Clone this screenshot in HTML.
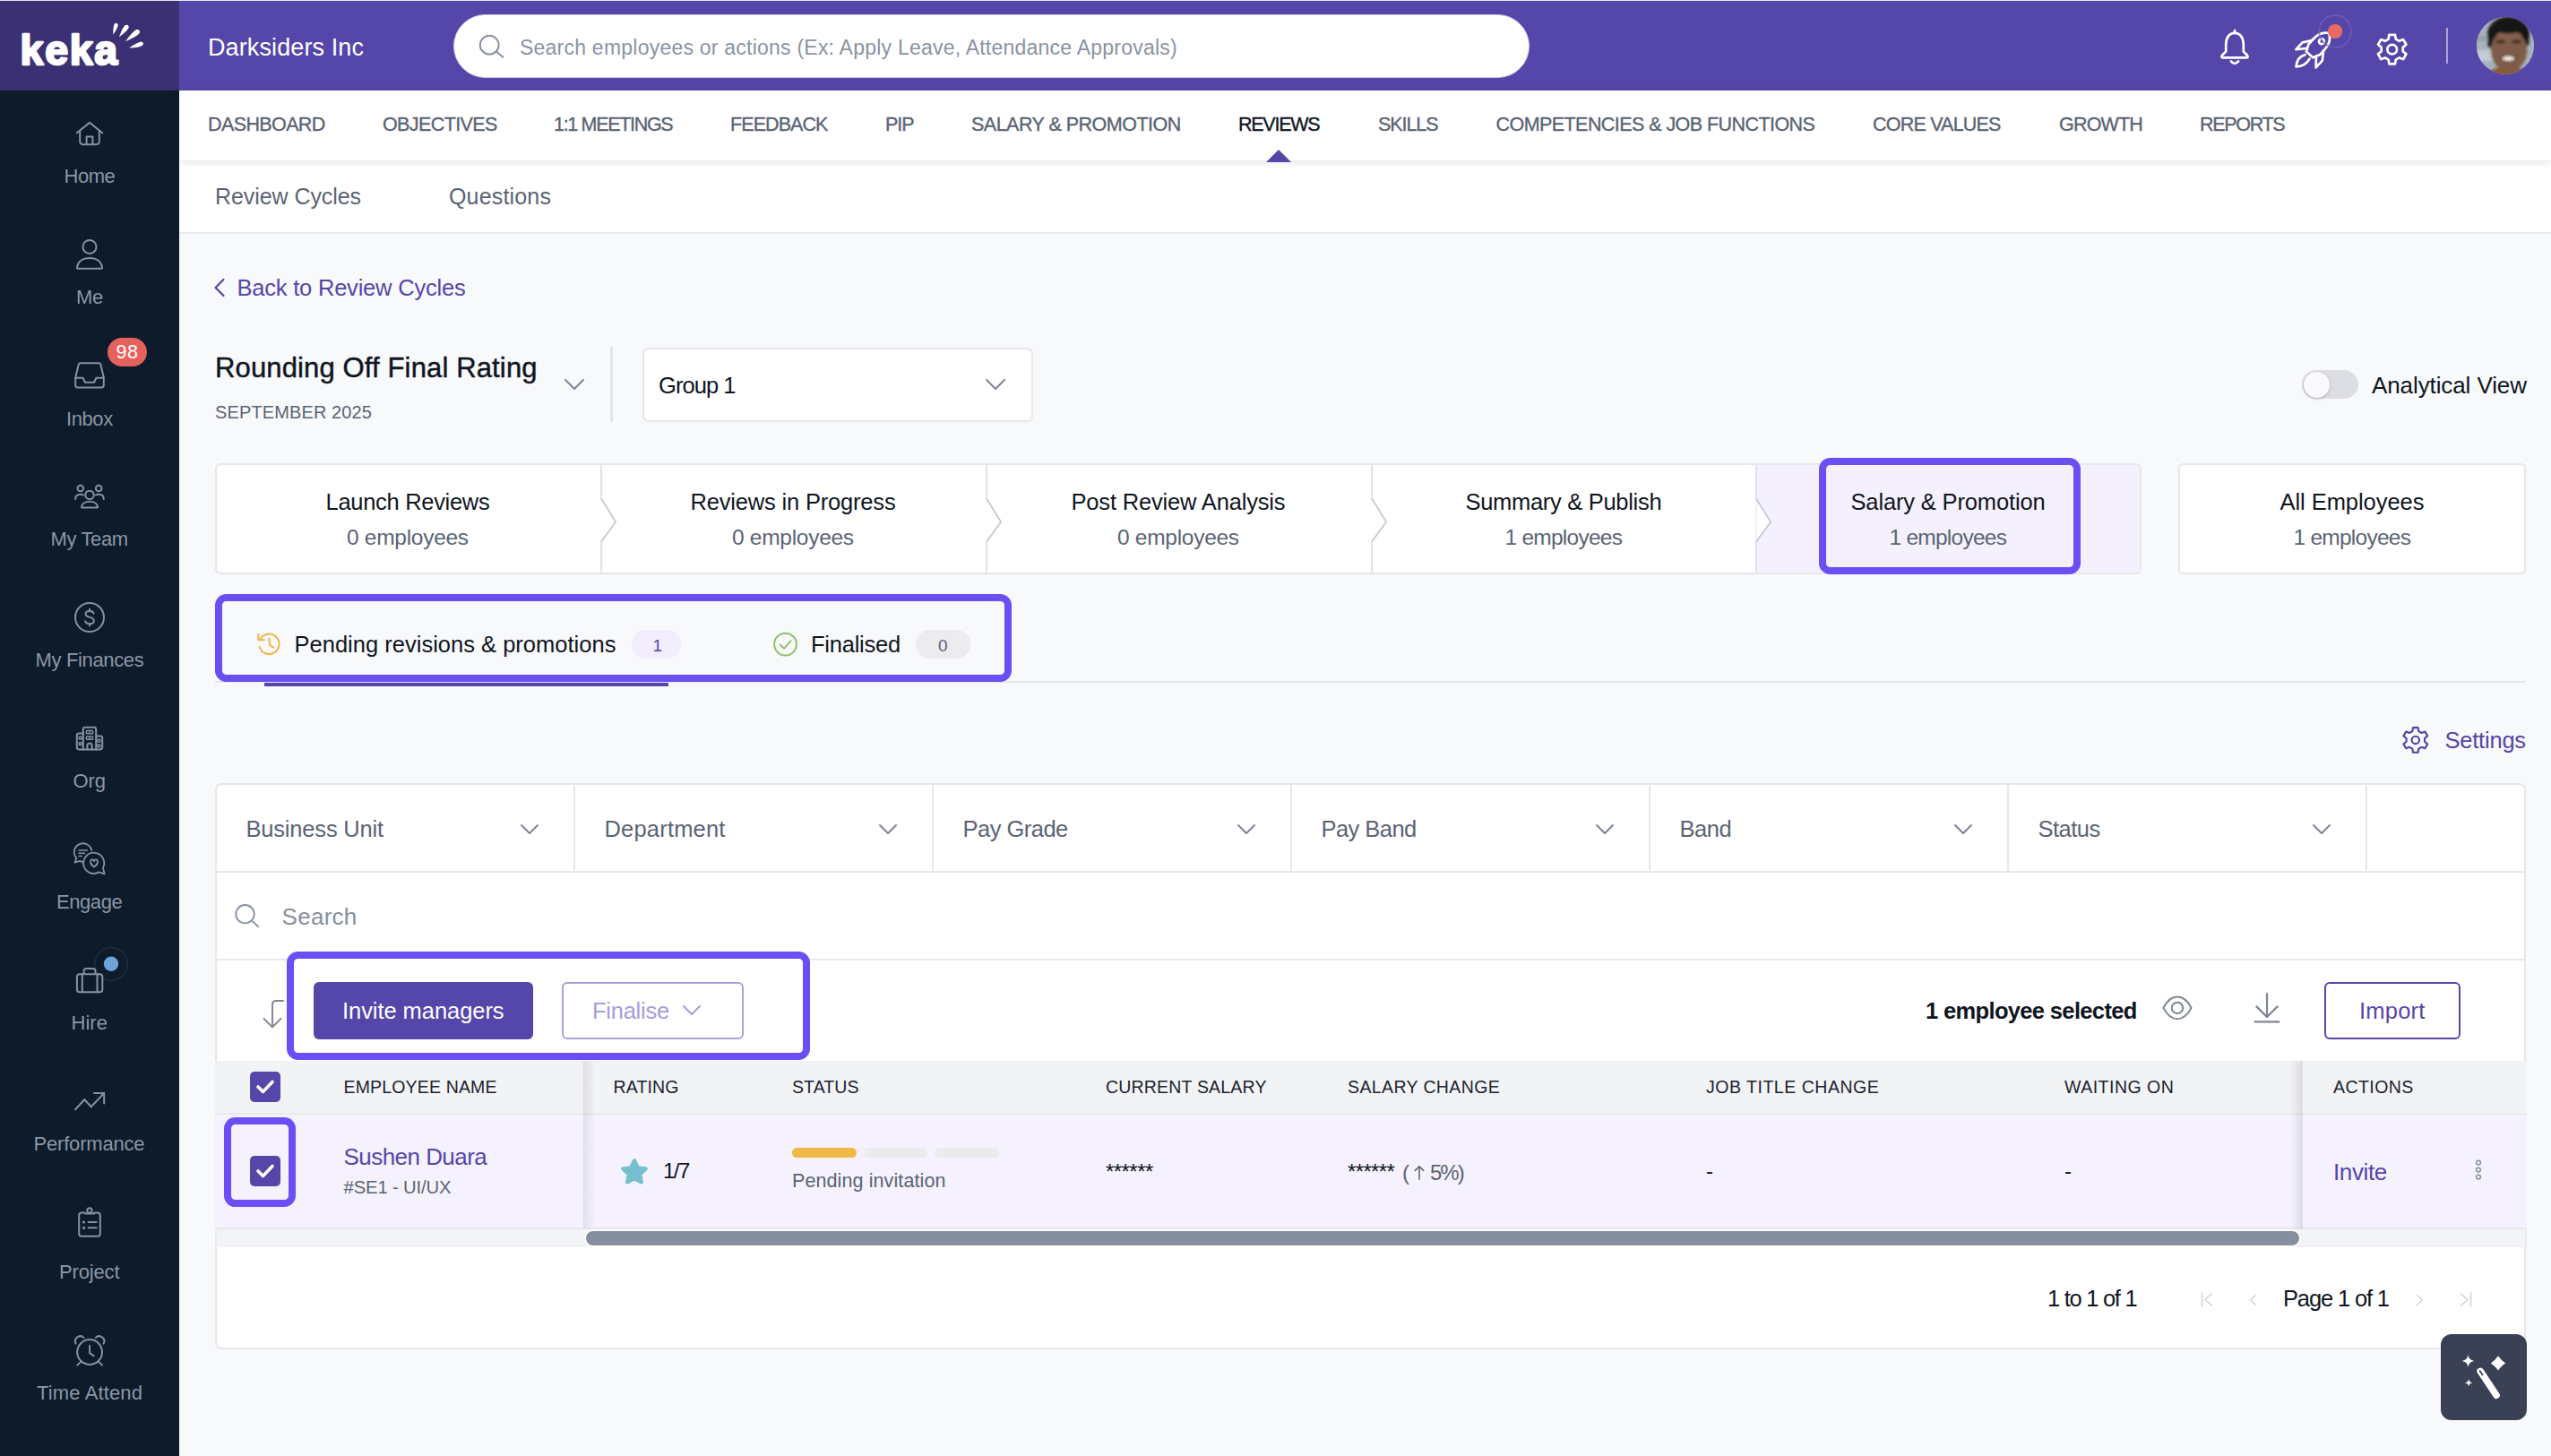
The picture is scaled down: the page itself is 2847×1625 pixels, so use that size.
<!DOCTYPE html>
<html><head><meta charset="utf-8"><title>Keka</title><style>
*{box-sizing:border-box;margin:0;padding:0}
html,body{width:2847px;height:1625px;overflow:hidden;background:#f8f9fb}
body{position:relative;font-family:"Liberation Sans",sans-serif}
div,svg,span.t{position:absolute}
span.t{white-space:pre;line-height:1;display:block}
</style></head>
<body>
<div style="left:0px;top:0px;width:2847px;height:101px;background:#5546a9"></div>
<div style="left:0px;top:0px;width:200px;height:101px;background:#3b3073"></div>
<div style="left:0px;top:0px;width:2847px;height:1px;background:#dfe7ee"></div>
<div style="left:0px;top:101px;width:200px;height:1524px;background:#0d1b2a"></div>
<span class="t" style="left:232px;top:39.5px;font-size:27px;color:#ffffff;font-weight:400;letter-spacing:0.11px;">Darksiders Inc</span>
<div style="left:505.5px;top:15.5px;width:1201px;height:71px;background:#fff;border-radius:36px;border:1.5px solid #cfcbe8"></div>
<span class="t" style="left:580px;top:41.5px;font-size:23px;color:#8a93a3;font-weight:400;letter-spacing:0.23px;">Search employees or actions (Ex: Apply Leave, Attendance Approvals)</span>
<div style="left:200px;top:179px;width:2647px;height:82px;background:#fff;border-bottom:2px solid #e8eaee"></div>
<span class="t" style="left:240px;top:207.3px;font-size:25px;color:#5b6473;font-weight:400;letter-spacing:-0.07px;">Review Cycles</span>
<span class="t" style="left:501px;top:207.3px;font-size:25px;color:#5b6473;font-weight:400;letter-spacing:0.17px;">Questions</span>
<div style="left:200px;top:101px;width:2647px;height:78px;background:#fff;box-shadow:0 2px 9px rgba(20,30,60,.13)"></div>
<span class="t" style="left:232px;top:128.8px;font-size:21.5px;color:#5b6473;font-weight:400;letter-spacing:-0.61px;-webkit-text-stroke:0.35px #5b6473">DASHBOARD</span>
<span class="t" style="left:427px;top:128.8px;font-size:21.5px;color:#5b6473;font-weight:400;letter-spacing:-0.61px;-webkit-text-stroke:0.35px #5b6473">OBJECTIVES</span>
<span class="t" style="left:618px;top:128.8px;font-size:21.5px;color:#5b6473;font-weight:400;letter-spacing:-1.32px;-webkit-text-stroke:0.35px #5b6473">1:1 MEETINGS</span>
<span class="t" style="left:815px;top:128.8px;font-size:21.5px;color:#5b6473;font-weight:400;letter-spacing:-0.92px;-webkit-text-stroke:0.35px #5b6473">FEEDBACK</span>
<span class="t" style="left:988px;top:128.8px;font-size:21.5px;color:#5b6473;font-weight:400;letter-spacing:-1.06px;-webkit-text-stroke:0.35px #5b6473">PIP</span>
<span class="t" style="left:1084px;top:128.8px;font-size:21.5px;color:#5b6473;font-weight:400;letter-spacing:-0.51px;-webkit-text-stroke:0.35px #5b6473">SALARY &amp; PROMOTION</span>
<span class="t" style="left:1382px;top:128.8px;font-size:21.5px;color:#10151f;font-weight:400;letter-spacing:-1.25px;-webkit-text-stroke:0.35px #10151f">REVIEWS</span>
<span class="t" style="left:1538px;top:128.8px;font-size:21.5px;color:#5b6473;font-weight:400;letter-spacing:-1.08px;-webkit-text-stroke:0.35px #5b6473">SKILLS</span>
<span class="t" style="left:1669.5px;top:128.8px;font-size:21.5px;color:#5b6473;font-weight:400;letter-spacing:-0.56px;-webkit-text-stroke:0.35px #5b6473">COMPETENCIES &amp; JOB FUNCTIONS</span>
<span class="t" style="left:2090px;top:128.8px;font-size:21.5px;color:#5b6473;font-weight:400;letter-spacing:-0.79px;-webkit-text-stroke:0.35px #5b6473">CORE VALUES</span>
<span class="t" style="left:2298px;top:128.8px;font-size:21.5px;color:#5b6473;font-weight:400;letter-spacing:-0.81px;-webkit-text-stroke:0.35px #5b6473">GROWTH</span>
<span class="t" style="left:2455px;top:128.8px;font-size:21.5px;color:#5b6473;font-weight:400;letter-spacing:-1.31px;-webkit-text-stroke:0.35px #5b6473">REPORTS</span>
<svg style="left:1413px;top:167px;" width="28" height="14" viewBox="0 0 28 14" fill="none"><path d="M0 14 L14 0 L28 14 Z" fill="#5546a9"/></svg>
<span class="t" style="left:71.5px;top:186.3px;font-size:22px;color:#8c96a6;font-weight:400;letter-spacing:-0.48px;">Home</span>
<span class="t" style="left:85px;top:321.3px;font-size:22px;color:#8c96a6;font-weight:400;letter-spacing:-0.38px;">Me</span>
<span class="t" style="left:74px;top:456.8px;font-size:22px;color:#8c96a6;font-weight:400;letter-spacing:-0.41px;">Inbox</span>
<span class="t" style="left:56.5px;top:591.3px;font-size:22px;color:#8c96a6;font-weight:400;letter-spacing:-0.36px;">My Team</span>
<span class="t" style="left:39.5px;top:726.3px;font-size:22px;color:#8c96a6;font-weight:400;letter-spacing:-0.35px;">My Finances</span>
<span class="t" style="left:81.5px;top:861.3px;font-size:22px;color:#8c96a6;font-weight:400;letter-spacing:-0.07px;">Org</span>
<span class="t" style="left:63px;top:996.3px;font-size:22px;color:#8c96a6;font-weight:400;letter-spacing:-0.43px;">Engage</span>
<span class="t" style="left:79.5px;top:1131.3px;font-size:22px;color:#8c96a6;font-weight:400;letter-spacing:0.04px;">Hire</span>
<span class="t" style="left:37.5px;top:1266.3px;font-size:22px;color:#8c96a6;font-weight:400;letter-spacing:-0.19px;">Performance</span>
<span class="t" style="left:66px;top:1409.3px;font-size:22px;color:#8c96a6;font-weight:400;letter-spacing:-0.15px;">Project</span>
<span class="t" style="left:41px;top:1544.3px;font-size:22px;color:#8c96a6;font-weight:400;letter-spacing:0.14px;">Time Attend</span>
<div style="left:120px;top:377px;width:44px;height:32px;background:#e5625c;border-radius:16px"></div>
<span class="t" style="left:129.4px;top:382.8px;font-size:21.5px;color:#fff;font-weight:400;letter-spacing:0.59px;">98</span>
<svg style="left:238px;top:310px;" width="14" height="22" viewBox="0 0 14 22" fill="none"><path d="M11.5 2 L2.5 11 L11.5 20" stroke="#5546a9" stroke-width="2.2" stroke-linecap="round" stroke-linejoin="round"/></svg>
<span class="t" style="left:264.5px;top:308.8px;font-size:25.5px;color:#5546a9;font-weight:400;letter-spacing:-0.21px;">Back to Review Cycles</span>
<span class="t" style="left:240px;top:395.0px;font-size:31px;color:#10151f;font-weight:400;letter-spacing:0.14px;-webkit-text-stroke:0.45px #10151f">Rounding Off Final Rating</span>
<span class="t" style="left:240px;top:450.1px;font-size:20px;color:#5b6473;font-weight:400;letter-spacing:0.12px;">SEPTEMBER 2025</span>
<svg style="left:629px;top:422px;" width="24" height="14" viewBox="0 0 24 14" fill="none"><path d="M2 2 L12 12 L22 2" stroke="#7a8393" stroke-width="1.9" stroke-linecap="round" stroke-linejoin="round"/></svg>
<div style="left:681px;top:387px;width:3px;height:84px;background:#e3e5ea"></div>
<div style="left:717px;top:387.5px;width:436px;height:83px;background:#fff;border:2px solid #e5e7eb;border-radius:7px"></div>
<span class="t" style="left:735px;top:417.8px;font-size:25.5px;color:#10151f;font-weight:400;letter-spacing:-0.94px;">Group 1</span>
<svg style="left:1099px;top:422px;" width="24" height="14" viewBox="0 0 24 14" fill="none"><path d="M2 2 L12 12 L22 2" stroke="#7a8393" stroke-width="1.9" stroke-linecap="round" stroke-linejoin="round"/></svg>
<div style="left:2569px;top:413px;width:63px;height:32px;background:#dddee4;border-radius:16px"></div>
<div style="left:2570.5px;top:414.5px;width:29px;height:29px;background:#fafafc;border-radius:50%;box-shadow:0 1px 3px rgba(0,0,0,.25)"></div>
<span class="t" style="left:2647px;top:417.1px;font-size:26px;color:#10151f;font-weight:400;letter-spacing:-0.10px;">Analytical View</span>
<div style="left:240px;top:517px;width:2150px;height:124px;background:#fff;border:2px solid #e5e7eb;border-radius:6px"></div>
<div style="left:1959px;top:519px;width:429px;height:120px;background:#f4f0fd;border-radius:0 4px 4px 0"></div>
<span class="t" style="left:363.5px;top:547.8px;font-size:25.5px;color:#10151f;font-weight:400;letter-spacing:-0.30px;">Launch Reviews</span>
<span class="t" style="left:387.0px;top:588.3px;font-size:24.5px;color:#5b6473;font-weight:400;letter-spacing:-0.28px;">0 employees</span>
<span class="t" style="left:770.5px;top:547.8px;font-size:25.5px;color:#10151f;font-weight:400;letter-spacing:-0.18px;">Reviews in Progress</span>
<span class="t" style="left:817.0px;top:588.3px;font-size:24.5px;color:#5b6473;font-weight:400;letter-spacing:-0.28px;">0 employees</span>
<span class="t" style="left:1195.5px;top:547.8px;font-size:25.5px;color:#10151f;font-weight:400;letter-spacing:-0.17px;">Post Review Analysis</span>
<span class="t" style="left:1247.0px;top:588.3px;font-size:24.5px;color:#5b6473;font-weight:400;letter-spacing:-0.28px;">0 employees</span>
<span class="t" style="left:1635.5px;top:547.8px;font-size:25.5px;color:#10151f;font-weight:400;letter-spacing:-0.30px;">Summary &amp; Publish</span>
<span class="t" style="left:1679.5px;top:588.3px;font-size:24.5px;color:#5b6473;font-weight:400;letter-spacing:-0.75px;">1 employees</span>
<span class="t" style="left:2065.5px;top:547.8px;font-size:25.5px;color:#10151f;font-weight:400;letter-spacing:-0.15px;">Salary &amp; Promotion</span>
<span class="t" style="left:2108.5px;top:588.3px;font-size:24.5px;color:#5b6473;font-weight:400;letter-spacing:-0.75px;">1 employees</span>
<svg style="left:668.5px;top:519px;" width="22" height="120" viewBox="0 0 22 120" fill="none"><path d="M2 0 V37.5 L18 63.5 L2 85.5 V120" stroke="#e0e3e8" stroke-width="2" fill="none"/><path d="M3.2 39.5 L18.6 63.5 L3.2 83.5 Z" fill="#fff"/><path d="M2 37.5 L18 63.5 L2 85.5" stroke="#c4c9d2" stroke-width="1.6" fill="none" stroke-linejoin="round"/></svg>
<svg style="left:1098.5px;top:519px;" width="22" height="120" viewBox="0 0 22 120" fill="none"><path d="M2 0 V37.5 L18 63.5 L2 85.5 V120" stroke="#e0e3e8" stroke-width="2" fill="none"/><path d="M3.2 39.5 L18.6 63.5 L3.2 83.5 Z" fill="#fff"/><path d="M2 37.5 L18 63.5 L2 85.5" stroke="#c4c9d2" stroke-width="1.6" fill="none" stroke-linejoin="round"/></svg>
<svg style="left:1528.5px;top:519px;" width="22" height="120" viewBox="0 0 22 120" fill="none"><path d="M2 0 V37.5 L18 63.5 L2 85.5 V120" stroke="#e0e3e8" stroke-width="2" fill="none"/><path d="M3.2 39.5 L18.6 63.5 L3.2 83.5 Z" fill="#fff"/><path d="M2 37.5 L18 63.5 L2 85.5" stroke="#c4c9d2" stroke-width="1.6" fill="none" stroke-linejoin="round"/></svg>
<svg style="left:1957.5px;top:519px;" width="22" height="120" viewBox="0 0 22 120" fill="none"><path d="M2 0 V37.5 L18 63.5 L2 85.5 V120" stroke="#e0e3e8" stroke-width="2" fill="none"/><path d="M3.2 39.5 L18.6 63.5 L3.2 83.5 Z" fill="#fff"/><path d="M2 37.5 L18 63.5 L2 85.5" stroke="#c4c9d2" stroke-width="1.6" fill="none" stroke-linejoin="round"/></svg>
<div style="left:2431px;top:517px;width:388px;height:124px;background:#fff;border:2px solid #e5e7eb;border-radius:6px"></div>
<span class="t" style="left:2544.5px;top:547.8px;font-size:25.5px;color:#10151f;font-weight:400;letter-spacing:-0.05px;">All Employees</span>
<span class="t" style="left:2559.5px;top:588.3px;font-size:24.5px;color:#5b6473;font-weight:400;letter-spacing:-0.75px;">1 employees</span>
<div style="left:2030px;top:511px;width:292px;height:130px;border:8px solid #6b4ef4;border-radius:12.5px"></div>
<div style="left:240px;top:760px;width:2579px;height:2px;background:#e5e7eb"></div>
<div style="left:295px;top:762px;width:451px;height:4px;background:#5546a9"></div>
<div style="left:240px;top:663px;width:889px;height:98px;border:8px solid #6b4ef4;border-radius:12.5px;background:#f8f9fb"></div>
<span class="t" style="left:328.5px;top:707.3px;font-size:25.5px;color:#10151f;font-weight:400;letter-spacing:0.01px;">Pending revisions &amp; promotions</span>
<div style="left:705px;top:703px;width:55px;height:32px;background:#f1edfc;border-radius:16px"></div>
<span class="t" style="left:728.5px;top:710.6px;font-size:19px;color:#5546a9;font-weight:400;letter-spacing:0.00px;">1</span>
<span class="t" style="left:905px;top:707.3px;font-size:25.5px;color:#10151f;font-weight:400;letter-spacing:-0.24px;">Finalised</span>
<div style="left:1022px;top:703px;width:61px;height:32px;background:#ececef;border-radius:16px"></div>
<span class="t" style="left:1047px;top:710.6px;font-size:19px;color:#5b6473;font-weight:400;letter-spacing:0.00px;">0</span>
<span class="t" style="left:2728.5px;top:814.3px;font-size:25.5px;color:#5546a9;font-weight:400;letter-spacing:-0.22px;">Settings</span>
<div style="left:240px;top:874px;width:2579px;height:632px;background:#fff;border:2px solid #e5e7eb;border-radius:7px"></div>
<div style="left:242px;top:972px;width:2575px;height:2px;background:#e5e7eb"></div>
<span class="t" style="left:274.5px;top:912.8px;font-size:25.5px;color:#5b6473;font-weight:400;letter-spacing:-0.19px;">Business Unit</span>
<svg style="left:580px;top:919px;" width="22" height="13" viewBox="0 0 22 13" fill="none"><path d="M2 2 L11 11 L20 2" stroke="#7a8393" stroke-width="1.9" stroke-linecap="round" stroke-linejoin="round"/></svg>
<div style="left:639.5px;top:876px;width:2px;height:96px;background:#e5e7eb"></div>
<span class="t" style="left:674.5px;top:912.8px;font-size:25.5px;color:#5b6473;font-weight:400;letter-spacing:0.19px;">Department</span>
<svg style="left:980px;top:919px;" width="22" height="13" viewBox="0 0 22 13" fill="none"><path d="M2 2 L11 11 L20 2" stroke="#7a8393" stroke-width="1.9" stroke-linecap="round" stroke-linejoin="round"/></svg>
<div style="left:1039.5px;top:876px;width:2px;height:96px;background:#e5e7eb"></div>
<span class="t" style="left:1074.5px;top:912.8px;font-size:25.5px;color:#5b6473;font-weight:400;letter-spacing:-0.52px;">Pay Grade</span>
<svg style="left:1380px;top:919px;" width="22" height="13" viewBox="0 0 22 13" fill="none"><path d="M2 2 L11 11 L20 2" stroke="#7a8393" stroke-width="1.9" stroke-linecap="round" stroke-linejoin="round"/></svg>
<div style="left:1439.5px;top:876px;width:2px;height:96px;background:#e5e7eb"></div>
<span class="t" style="left:1474.5px;top:912.8px;font-size:25.5px;color:#5b6473;font-weight:400;letter-spacing:-0.55px;">Pay Band</span>
<svg style="left:1780px;top:919px;" width="22" height="13" viewBox="0 0 22 13" fill="none"><path d="M2 2 L11 11 L20 2" stroke="#7a8393" stroke-width="1.9" stroke-linecap="round" stroke-linejoin="round"/></svg>
<div style="left:1839.5px;top:876px;width:2px;height:96px;background:#e5e7eb"></div>
<span class="t" style="left:1874.5px;top:912.8px;font-size:25.5px;color:#5b6473;font-weight:400;letter-spacing:-0.45px;">Band</span>
<svg style="left:2180px;top:919px;" width="22" height="13" viewBox="0 0 22 13" fill="none"><path d="M2 2 L11 11 L20 2" stroke="#7a8393" stroke-width="1.9" stroke-linecap="round" stroke-linejoin="round"/></svg>
<div style="left:2239.5px;top:876px;width:2px;height:96px;background:#e5e7eb"></div>
<span class="t" style="left:2274.5px;top:912.8px;font-size:25.5px;color:#5b6473;font-weight:400;letter-spacing:-0.51px;">Status</span>
<svg style="left:2580px;top:919px;" width="22" height="13" viewBox="0 0 22 13" fill="none"><path d="M2 2 L11 11 L20 2" stroke="#7a8393" stroke-width="1.9" stroke-linecap="round" stroke-linejoin="round"/></svg>
<div style="left:2639.5px;top:876px;width:2px;height:96px;background:#e5e7eb"></div>
<div style="left:242px;top:1070px;width:2575px;height:2px;background:#e5e7eb"></div>
<svg style="left:261px;top:1007px;" width="30" height="30" viewBox="0 0 30 30" fill="none"><circle cx="12.5" cy="13.2" r="10.2" stroke="#8791a1" stroke-width="1.9"/><path d="M20 20.6 L27 27" stroke="#8791a1" stroke-width="1.9" stroke-linecap="round"/></svg>
<span class="t" style="left:314.5px;top:1009.6px;font-size:26px;color:#868f9f;font-weight:400;letter-spacing:0.29px;">Search</span>
<svg style="left:289.8px;top:1115.2px;" width="28" height="36" viewBox="0 0 28 36" fill="none"><path d="M26 2 H18 Q14 2 14 6 V31 M4.6 22 L14 31.4 L23.4 22" stroke="#7d8696" stroke-width="1.9" stroke-linecap="round" stroke-linejoin="round"/></svg>
<div style="left:320px;top:1062px;width:584px;height:121px;border:8px solid #6b4ef4;border-radius:12.5px;background:#fff"></div>
<div style="left:350px;top:1096px;width:245px;height:64px;background:#5546a9;border-radius:6px"></div>
<span class="t" style="left:382px;top:1115.8px;font-size:25.5px;color:#fff;font-weight:400;letter-spacing:-0.06px;">Invite managers</span>
<div style="left:627px;top:1096px;width:203px;height:64px;background:#fff;border:2px solid #aaa2dc;border-radius:6px"></div>
<span class="t" style="left:661px;top:1115.8px;font-size:25.5px;color:#a59ddb;font-weight:400;letter-spacing:-0.25px;">Finalise</span>
<svg style="left:761px;top:1121px;" width="22" height="13" viewBox="0 0 22 13" fill="none"><path d="M2 2 L11 11 L20 2" stroke="#a59ddb" stroke-width="2" stroke-linecap="round" stroke-linejoin="round"/></svg>
<span class="t" style="left:2149px;top:1116.3px;font-size:25.5px;color:#10151f;font-weight:700;letter-spacing:-0.65px;">1 employee selected</span>
<div style="left:2594px;top:1096px;width:152px;height:64px;background:#fff;border:2px solid #5546a9;border-radius:6px"></div>
<span class="t" style="left:2633px;top:1115.8px;font-size:25.5px;color:#5546a9;font-weight:400;letter-spacing:0.22px;">Import</span>
<div style="left:240px;top:1184px;width:2580px;height:59px;background:#f2f3f5"></div>
<span class="t" style="left:383.5px;top:1203.7px;font-size:19.5px;color:#1d2330;font-weight:400;letter-spacing:0.16px;">EMPLOYEE NAME</span>
<span class="t" style="left:684.5px;top:1203.7px;font-size:19.5px;color:#1d2330;font-weight:400;letter-spacing:0.14px;">RATING</span>
<span class="t" style="left:884px;top:1203.7px;font-size:19.5px;color:#1d2330;font-weight:400;letter-spacing:0.09px;">STATUS</span>
<span class="t" style="left:1234px;top:1203.7px;font-size:19.5px;color:#1d2330;font-weight:400;letter-spacing:0.19px;">CURRENT SALARY</span>
<span class="t" style="left:1504px;top:1203.7px;font-size:19.5px;color:#1d2330;font-weight:400;letter-spacing:0.39px;">SALARY CHANGE</span>
<span class="t" style="left:1904px;top:1203.7px;font-size:19.5px;color:#1d2330;font-weight:400;letter-spacing:0.52px;">JOB TITLE CHANGE</span>
<span class="t" style="left:2304px;top:1203.7px;font-size:19.5px;color:#1d2330;font-weight:400;letter-spacing:0.49px;">WAITING ON</span>
<span class="t" style="left:2604px;top:1203.7px;font-size:19.5px;color:#1d2330;font-weight:400;letter-spacing:0.43px;">ACTIONS</span>
<div style="left:240px;top:1242px;width:2580px;height:130px;background:#f5f2fd;border-top:2px solid #e9e9ee;border-bottom:2px solid #e7e8ec"></div>
<div style="left:651px;top:1184px;width:14px;height:187px;background:linear-gradient(90deg,rgba(60,60,90,.10),rgba(60,60,90,0))"></div>
<div style="left:2556px;top:1184px;width:14px;height:187px;background:linear-gradient(270deg,rgba(60,60,90,.13),rgba(60,60,90,0))"></div>
<div style="left:279px;top:1196px;width:34px;height:34px;background:#5546a9;border-radius:5px"><svg style="left:6px;top:8px" width="22" height="18" viewBox="0 0 22 18" fill="none"><path d="M3 9 L8.5 14.5 L19 3.5" stroke="#fff" stroke-width="3.6" stroke-linecap="round" stroke-linejoin="round"/></svg></div>
<div style="left:250px;top:1247px;width:80px;height:100px;border:8px solid #6b4ef4;border-radius:12.5px;background:#f5f1fd"></div>
<div style="left:279px;top:1290px;width:34px;height:34px;background:#5546a9;border-radius:5px"><svg style="left:6px;top:8px" width="22" height="18" viewBox="0 0 22 18" fill="none"><path d="M3 9 L8.5 14.5 L19 3.5" stroke="#fff" stroke-width="3.6" stroke-linecap="round" stroke-linejoin="round"/></svg></div>
<span class="t" style="left:383.5px;top:1278.2px;font-size:26px;color:#5546a9;font-weight:400;letter-spacing:-0.54px;">Sushen Duara</span>
<span class="t" style="left:383.5px;top:1315.2px;font-size:20.3px;color:#5b6473;font-weight:400;letter-spacing:-0.15px;">#SE1 - UI/UX</span>
<span class="t" style="left:740px;top:1295.4px;font-size:24px;color:#10151f;font-weight:400;letter-spacing:-1.55px;">1/7</span>
<div style="left:884px;top:1281px;width:72px;height:11px;background:#f0b945;border-radius:6px"></div>
<div style="left:964px;top:1281px;width:71px;height:11px;background:#ebebee;border-radius:6px"></div>
<div style="left:1043px;top:1281px;width:72px;height:11px;background:#ebebee;border-radius:6px"></div>
<span class="t" style="left:884px;top:1307.8px;font-size:21.5px;color:#5b6473;font-weight:400;letter-spacing:0.10px;">Pending invitation</span>
<span class="t" style="left:1234px;top:1296.1px;font-size:24px;color:#10151f;font-weight:400;letter-spacing:-0.55px;">******</span>
<span class="t" style="left:1504px;top:1296.1px;font-size:24px;color:#10151f;font-weight:400;letter-spacing:-0.64px;">******</span>
<span class="t" style="left:1565px;top:1296.6px;font-size:24px;color:#5b6473;font-weight:400;letter-spacing:0.00px;">(</span>
<span class="t" style="left:1596px;top:1296.6px;font-size:24px;color:#5b6473;font-weight:400;letter-spacing:-2.00px;">5%)</span>
<svg style="left:1577.5px;top:1299.5px;" width="12" height="17" viewBox="0 0 14 20" fill="none"><path d="M7 19 V2 M1.5 7.5 L7 2 L12.5 7.5" stroke="#5b6473" stroke-width="1.8" stroke-linecap="round" stroke-linejoin="round"/></svg>
<span class="t" style="left:1904px;top:1294.6px;font-size:24px;color:#10151f;font-weight:400;letter-spacing:0.00px;">-</span>
<span class="t" style="left:2304px;top:1294.6px;font-size:24px;color:#10151f;font-weight:400;letter-spacing:0.00px;">-</span>
<span class="t" style="left:2604px;top:1294.6px;font-size:26px;color:#5546a9;font-weight:400;letter-spacing:-0.39px;">Invite</span>
<svg style="left:2760px;top:1293.6px;" width="12" height="24" viewBox="0 0 12 24" fill="none"><circle cx="6" cy="3.6" r="2.4" stroke="#8791a1" stroke-width="1.5"/><circle cx="6" cy="11.6" r="2.4" stroke="#8791a1" stroke-width="1.5"/><circle cx="6" cy="19.6" r="2.4" stroke="#8791a1" stroke-width="1.5"/></svg>
<div style="left:240px;top:1372px;width:2580px;height:20px;background:#f3f4f7;border-left:2px solid #e9ebee;border-right:2px solid #e9ebee"></div>
<div style="left:654px;top:1374px;width:1912px;height:16px;background:#868e9f;border-radius:8px;box-shadow:0 0 0 1.5px #fff"></div>
<span class="t" style="left:2285px;top:1436.8px;font-size:25.5px;color:#10151f;font-weight:400;letter-spacing:-1.28px;">1 to 1 of 1</span>
<span class="t" style="left:2548px;top:1436.8px;font-size:25.5px;color:#10151f;font-weight:400;letter-spacing:-1.14px;">Page 1 of 1</span>
<svg style="left:2455.5px;top:1442px;" width="14" height="17" viewBox="0 0 14 17" fill="none"><path d="M1.5 1 V16 M12.5 2 L5 8.5 L12.5 15" stroke="#d0d3da" stroke-width="1.6" stroke-linecap="round" stroke-linejoin="round"/></svg>
<svg style="left:2509.5px;top:1444px;" width="9" height="14" viewBox="0 0 9 14" fill="none"><path d="M7.5 1.5 L1.5 7 L7.5 12.5" stroke="#d0d3da" stroke-width="1.6" stroke-linecap="round" stroke-linejoin="round"/></svg>
<svg style="left:2695.5px;top:1444px;" width="9" height="14" viewBox="0 0 9 14" fill="none"><path d="M1.5 1.5 L7.5 7 L1.5 12.5" stroke="#d0d3da" stroke-width="1.6" stroke-linecap="round" stroke-linejoin="round"/></svg>
<svg style="left:2745px;top:1442px;" width="14" height="17" viewBox="0 0 14 17" fill="none"><path d="M12.5 1 V16 M1.5 2 L9 8.5 L1.5 15" stroke="#d0d3da" stroke-width="1.6" stroke-linecap="round" stroke-linejoin="round"/></svg>
<div style="left:2724px;top:1489px;width:96px;height:96px;background:#3a4154;border-radius:12px"></div>
<svg style="left:0;top:0" width="2847" height="1625" viewBox="0 0 2847 1625" fill="none"><circle cx="124" cy="1075.8" r="18.3" stroke="#1b2b3e" stroke-width="1.8" fill="none"/><g stroke="#8791a1" stroke-width="2" stroke-linecap="round" stroke-linejoin="round" fill="none"><path d="M85.8 148.3 L100 136.9 L114.2 148.3"/><path d="M89.2 146 V157.6 Q89.2 161.2 92.8 161.2 H107.2 Q110.8 161.2 110.8 157.6 V146"/><path d="M96.6 161 V152.6 H103.4 V161"/><circle cx="100" cy="275.4" r="7.5"/><path d="M87.4 299.8 H112.6 Q114.4 299.8 114 298 C112.8 291.6 107.4 288 100 288 C92.6 288 87.2 291.6 86 298 Q85.6 299.8 87.4 299.8 Z"/><path d="M89.8 405.2 H110.2 Q111.9 405.2 112.3 406.8 L115.8 421.6 V430 Q115.8 432.4 113.4 432.4 H86.6 Q84.2 432.4 84.2 430 V421.6 L87.7 406.8 Q88.1 405.2 89.8 405.2 Z"/><path d="M84.4 421.8 H92.6 L95 426.8 H105 L107.4 421.8 H115.6"/><circle cx="89.8" cy="545" r="3.3"/><circle cx="110.2" cy="545" r="3.3"/><circle cx="100" cy="552.4" r="4.7"/><path d="M91 566.5 C91 562 95 559.8 100 559.8 C105 559.8 109 562 109 566.5 Z"/><path d="M84.2 557 C84.2 553.4 87 551.8 90 551.8 C91.2 551.8 92.2 552 93.1 552.5"/><path d="M115.8 557 C115.8 553.4 113 551.8 110 551.8 C108.8 551.8 107.8 552 106.9 552.5"/><circle cx="100" cy="689.1" r="16"/><path d="M104.6 684.6 C104 682.8 102.2 682 100 682 C97.4 682 95.5 683.3 95.5 685.3 C95.5 687.6 97.6 688.3 100 688.9 C102.6 689.5 104.8 690.3 104.8 692.7 C104.8 694.9 102.8 696.2 100 696.2 C97.5 696.2 95.7 695.2 95.1 693.3"/><path d="M100 679.8 V682 M100 696.2 V698.6"/><path d="M92.8 836.4 V814 Q92.8 811.7 95.1 811.7 H104.9 Q107.2 811.7 107.2 814 V836.4"/><path d="M92.8 818.6 H88.1 Q85.8 818.6 85.8 820.9 V834.1 Q85.8 836.4 88.1 836.4 H111.9 Q114.2 836.4 114.2 834.1 V823.7 Q114.2 821.4 111.9 821.4 H107.2"/><path d="M97.4 836.4 V832 Q97.4 829.4 100 829.4 Q102.6 829.4 102.6 832 V836.4"/></g><g stroke="#8791a1" stroke-width="1.5" fill="none" stroke-linejoin="round"><rect x="96.4" y="815.4" width="7.2" height="3.3" rx="0.8"/><path d="M100 815.4 V818.7"/><rect x="96.4" y="822" width="7.2" height="3.3" rx="0.8"/><path d="M100 822 V825.3"/><rect x="88.3" y="822.3" width="2.8" height="2.8" rx="0.6"/><rect x="88.3" y="828.7" width="2.8" height="2.8" rx="0.6"/><rect x="108.9" y="825.2" width="2.8" height="2.8" rx="0.6"/><rect x="108.9" y="831" width="2.8" height="2.8" rx="0.6"/></g><g stroke="#8791a1" stroke-width="1.8" stroke-linecap="round" stroke-linejoin="round" fill="none"><path d="M102.2 949 A9.8 9.8 0 1 0 85.3 957.6 L83.6 962.6 L89 960.9 Q90.6 961.8 92.4 962"/><path d="M88 948.9 H97.4 M88 952.2 H94.6 M88 955.5 H91.2" stroke-width="1.5"/><path d="M110.4 973.4 A11.6 11.6 0 1 1 115 968.6 L116.6 975.3 Z"/><path d="M105 967.6 C99.6 964 100.3 959.4 103 959.4 C104.2 959.4 105 960.4 105 961.3 C105 960.4 105.8 959.4 107 959.4 C109.7 959.4 110.4 964 105 967.6 Z"/></g><g stroke="#8791a1" stroke-width="2" stroke-linecap="round" stroke-linejoin="round" fill="none"><rect x="85.9" y="1087.2" width="28.4" height="20" rx="3"/><path d="M93.6 1087 V1083.6 Q93.6 1081 96.2 1081 H103.8 Q106.4 1081 106.4 1083.6 V1087"/><path d="M91.8 1087.4 V1107 M108.5 1087.4 V1107"/><path d="M84 1238.3 L94.3 1227.3 L101.7 1235.3 L115.8 1220.4" stroke-linejoin="miter"/><path d="M105 1220 H116.2 V1231.6" stroke-linejoin="miter"/><path d="M94.6 1353.4 H91 Q88.2 1353.4 88.2 1356.2 V1377 Q88.2 1379.8 91 1379.8 H109 Q111.8 1379.8 111.8 1377 V1356.2 Q111.8 1353.4 109 1353.4 H105.4"/><circle cx="100" cy="1350.9" r="2.7"/><path d="M94.8 1354.6 H105.2"/><path d="M98.6 1364 H107.6 M98.6 1370.3 H107.6"/><circle cx="100.1" cy="1509" r="13.9"/><path d="M100.1 1501.8 V1510.2 L104.6 1513.2"/><path d="M90.6 1519.4 L86.2 1523.6 M109.6 1519.4 L114 1523.6"/><path d="M84.6 1499.6 A5.6 5.6 0 0 1 93.4 1492.9"/><path d="M115.6 1499.6 A5.6 5.6 0 0 0 106.8 1492.9"/></g><circle cx="93.6" cy="1364" r="1.6" fill="#8791a1"/><circle cx="93.6" cy="1370.3" r="1.6" fill="#8791a1"/><circle cx="124" cy="1075.8" r="8.2" fill="#6ea3d8"/><text x="22.6" y="72.3" font-family="Liberation Sans" font-weight="700" font-size="46.5" letter-spacing="1.7" fill="#fff" stroke="#fff" stroke-width="2.4" stroke-linejoin="round">keka</text><path d="M126.2 38.8 Q131.5 31.3 131.7 27.8 Q130.6 24.5 127.9 26.6 Q126.1 29.6 126.2 38.8 Z" fill="#fff"/><path d="M133.0 41.2 Q142.1 34.7 143.7 30.8 Q143.8 26.7 139.9 28.0 Q136.6 30.7 133.0 41.2 Z" fill="#fff"/><path d="M140.0 46.2 Q152.5 41.1 155.7 37.1 Q157.0 32.6 152.3 32.9 Q147.7 35.2 140.0 46.2 Z" fill="#fff"/><path d="M144.0 53.6 Q155.4 53.0 159.1 50.7 Q161.4 47.6 157.7 46.5 Q153.3 47.0 144.0 53.6 Z" fill="#fff"/><circle cx="546.2" cy="50.2" r="10.4" stroke="#8791a1" stroke-width="2" fill="none"/><path d="M553.8 57.6 L561.4 63.8" stroke="#8791a1" stroke-width="2" stroke-linecap="round"/><g stroke="#fff" stroke-width="2.7" stroke-linecap="round" stroke-linejoin="round" fill="none"><path d="M2494 34 V36.6"/><path d="M2484.2 57.5 V50 C2484.2 42 2488 36.8 2494 36.8 C2500 36.8 2503.8 42 2503.8 50 V57.5 L2508.2 62 Q2509.4 64.4 2507 64.4 H2481 Q2478.6 64.4 2479.8 62 Z"/><path d="M2489.9 68.4 Q2494 73.4 2498.1 68.4"/></g><g stroke="#fff" stroke-width="2.7" stroke-linecap="round" stroke-linejoin="round" fill="none" transform="translate(2587.7 49.8) rotate(42.3)"><path d="M0 -17.2 C5.4 -14 8.6 -8 8.6 -1 L8.6 7.4 L5 15 L-5 15 L-8.6 7.4 L-8.6 -1 C-8.6 -8 -5.4 -14 0 -17.2 Z"/><circle cx="0" cy="-4.8" r="2.9"/><path d="M-8.6 1.6 L-15 10.4 L-15 21 L-6.8 11.6"/><path d="M8.6 1.6 L15 10.4 L15 21 L6.8 11.6"/><path d="M-3.6 18.6 C-7 24 -6 30 -2 35.2 C3 30.4 4.6 24 3.2 18.6"/></g><circle cx="2606.1" cy="35" r="17.9" stroke="#7b5fb8" stroke-width="1.6" fill="none" opacity=".75"/><circle cx="2606.1" cy="35" r="8.1" fill="#ea6b62"/><g stroke="#fff" stroke-width="2.7" stroke-linecap="round" stroke-linejoin="round" fill="none"><path d="M2673.8 43.6 L2673.0 38.8 L2666.4 38.8 L2665.6 43.6 L2661.8 45.8 L2657.3 44.1 L2654.0 49.8 L2657.7 52.9 L2657.7 57.3 L2654.0 60.4 L2657.3 66.1 L2661.8 64.4 L2665.6 66.6 L2666.4 71.4 L2673.0 71.4 L2673.8 66.6 L2677.6 64.4 L2682.1 66.1 L2685.4 60.4 L2681.7 57.3 L2681.7 52.9 L2685.4 49.8 L2682.1 44.1 L2677.6 45.8 Z"/><circle cx="2669.7" cy="55.1" r="5.3"/></g><rect x="2730" y="31" width="2" height="40" fill="#a9a1d8"/><defs><clipPath id="av"><circle cx="2796" cy="50.9" r="32.1"/></clipPath><filter id="bl" x="-20%" y="-20%" width="140%" height="140%"><feGaussianBlur stdDeviation="1.5"/></filter></defs><g clip-path="url(#av)"><rect x="2760" y="15" width="72" height="72" fill="#a7b2be"/><g filter="url(#bl)"><rect x="2760" y="56" width="30" height="12" fill="#c3ccd6"/><rect x="2760" y="40" width="20" height="6" fill="#96a2ae"/><ellipse cx="2799.5" cy="38" rx="23.5" ry="19.5" fill="#141414"/><rect x="2776.5" y="36" width="7" height="17" rx="3" fill="#181615"/><rect x="2816" y="36" width="6.5" height="15" rx="3" fill="#181615"/><ellipse cx="2799" cy="89" rx="27" ry="15" fill="#8b5a34"/><ellipse cx="2800" cy="56.5" rx="20.3" ry="23" fill="#7f5b4a"/><ellipse cx="2800" cy="40" rx="14" ry="5" fill="#86604e"/><ellipse cx="2799.5" cy="30" rx="17" ry="7.5" fill="#151414"/><ellipse cx="2791" cy="46.6" rx="5.2" ry="2" fill="#3b2a22"/><ellipse cx="2808.5" cy="46.6" rx="5.2" ry="2" fill="#3b2a22"/><ellipse cx="2799.4" cy="65.2" rx="9.4" ry="4.2" fill="#5e3a2c"/><ellipse cx="2799.4" cy="65.3" rx="6.8" ry="2.7" fill="#f1e9e3"/></g></g><g stroke="#f0b648" stroke-width="2" stroke-linecap="round" stroke-linejoin="round" fill="none"><path d="M290.6 713.2 A11.2 11.2 0 1 1 289.6 722"/><path d="M288.4 707.8 V714.2 H294.8"/><path d="M300.6 712.4 V719.4 L305.2 722.6"/></g><g stroke="#8cc26c" stroke-width="2" stroke-linecap="round" stroke-linejoin="round" fill="none"><circle cx="876.5" cy="719.1" r="12.4"/><path d="M870.8 719.6 L875 723.8 L882.6 715.2"/></g><g stroke="#4f42a8" stroke-width="2.1" stroke-linejoin="round" fill="none"><path d="M2699.3 816.1 L2698.6 812.1 L2693.0 812.1 L2692.3 816.1 L2689.0 818.0 L2685.2 816.6 L2682.4 821.4 L2685.6 824.0 L2685.6 827.8 L2682.4 830.4 L2685.2 835.2 L2689.0 833.8 L2692.3 835.7 L2693.0 839.7 L2698.6 839.7 L2699.3 835.7 L2702.6 833.8 L2706.4 835.2 L2709.2 830.4 L2706.0 827.8 L2706.0 824.0 L2709.2 821.4 L2706.4 816.6 L2702.6 818.0 Z"/><circle cx="2695.8" cy="825.9" r="4.2"/></g><path d="M708.0 1295.4 L704.2 1303.4 L695.4 1304.5 L701.9 1310.6 L700.2 1319.3 L708.0 1315.0 L715.8 1319.3 L714.1 1310.6 L720.6 1304.5 L711.8 1303.4 Z" fill="#76bfce" stroke="#76bfce" stroke-width="4.4" stroke-linejoin="round"/><g stroke="#7d8696" stroke-width="2" stroke-linecap="round" stroke-linejoin="round" fill="none"><path d="M2414.4 1124.9 C2419 1116.2 2424.4 1112.6 2430 1112.6 C2435.6 1112.6 2441 1116.2 2445.6 1124.9 C2441 1133.6 2435.6 1137.2 2430 1137.2 C2424.4 1137.2 2419 1133.6 2414.4 1124.9 Z"/><circle cx="2430" cy="1124.9" r="6.2"/><path d="M2530 1109 V1134.6 M2518.4 1123.4 L2530 1135 L2541.6 1123.4 M2516.6 1140.4 H2543.4" stroke-width="2.2"/></g><path d="M2768.2 1530.4 L2786 1557.2" stroke="#fff" stroke-width="7.6" stroke-linecap="round"/><path d="M2767.6 1530 L2770.6 1534.4" stroke="#3d4255" stroke-width="1.8" stroke-linecap="round"/><path d="M2754.5 1512.1000000000001 Q2755.3 1518.1 2761.3 1518.9 Q2755.3 1519.7 2754.5 1525.7 Q2753.7 1519.7 2747.7 1518.9 Q2753.7 1518.1 2754.5 1512.1000000000001 Z" fill="#fff"/><path d="M2788 1513.2 Q2791.3 1518.1 2796.2 1521.4 Q2791.3 1524.7 2788 1529.6000000000001 Q2784.7 1524.7 2779.8 1521.4 Q2784.7 1518.1 2788 1513.2 Z" fill="#fff"/><path d="M2755.1 1539.0 Q2755.6 1542.7 2759.2999999999997 1543.2 Q2755.6 1543.7 2755.1 1547.4 Q2754.6 1543.7 2750.9 1543.2 Q2754.6 1542.7 2755.1 1539.0 Z" fill="#fff"/></svg>
</body></html>
